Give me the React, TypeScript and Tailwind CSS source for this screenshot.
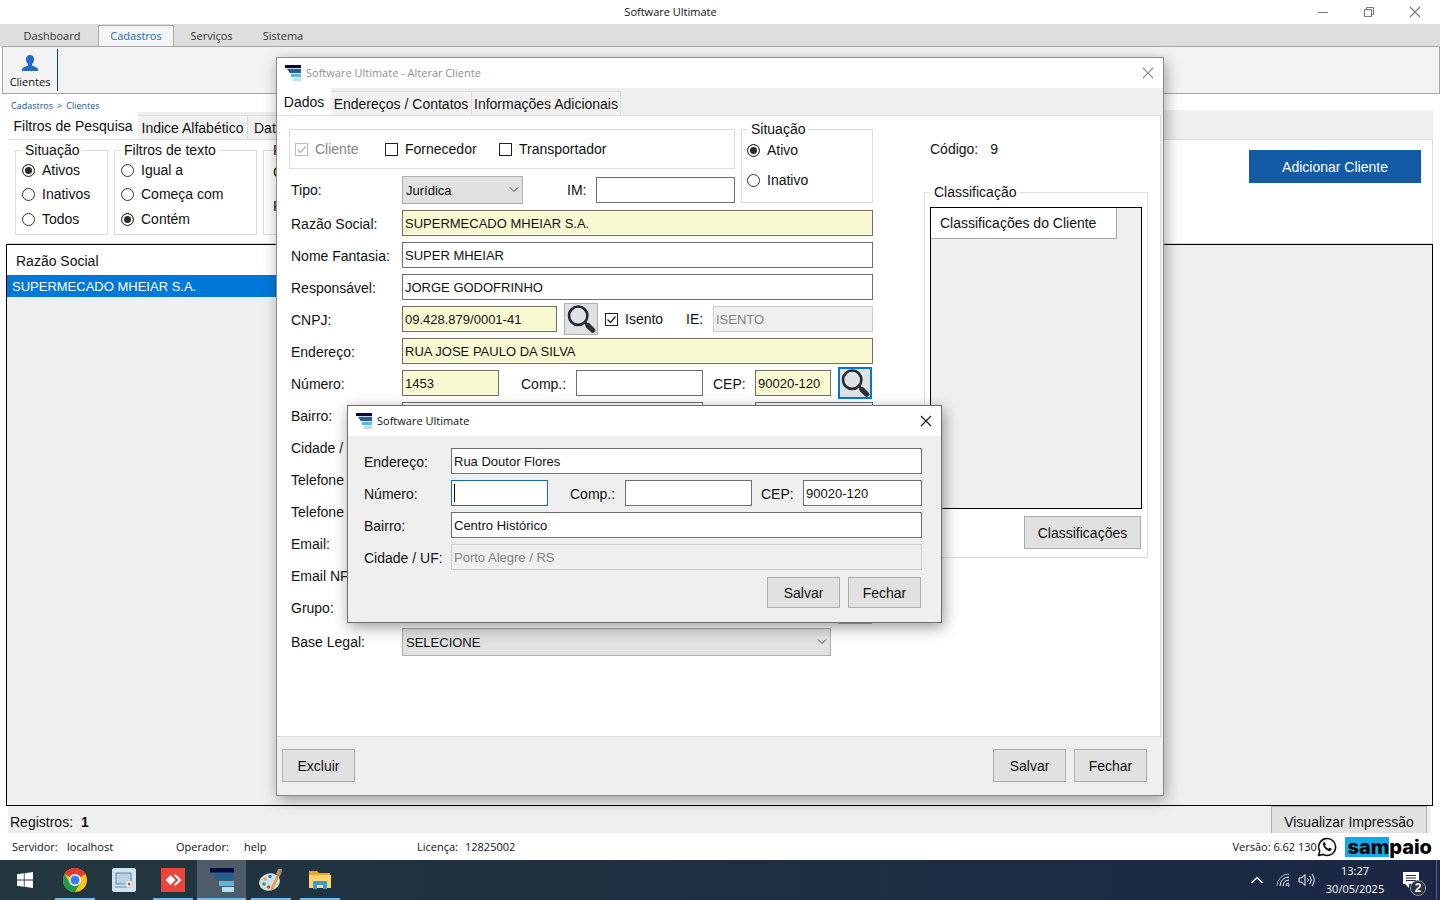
import type { ComponentProps, ReactNode } from 'react';
import clsx from 'clsx';

const ribbonTabs = [
  { label: 'Dashboard', width: 'w-[98px] pl-1.5' },
  { label: 'Cadastros', width: 'w-[76px]', active: true },
  { label: 'Serviços', width: 'w-[75px]' },
  { label: 'Sistema', width: 'w-[68px]' },
];

function AppLogo({ className }: { className?: string }) {
  return (
    <svg viewBox="0 0 24 24" className={className} aria-hidden="true">
      <rect x="0" y="0" width="24" height="4.500" fill="#04093f" />
      <path d="M3 5.500h21v6.500H7z" fill="#245f93" />
      <rect x="9" y="13" width="15" height="5" rx="0.500" fill="#5fb4dd" />
      <rect x="12" y="19" width="12" height="5" rx="0.500" fill="#b4e2f5" />
    </svg>
  );
}

function CloseIcon({ className }: { className?: string }) {
  return (
    <svg viewBox="0 0 12 12" className={clsx('size-3', className)} fill="none" stroke="currentColor" strokeWidth="1.1">
      <path d="M1 1l10 10M11 1L1 11" />
    </svg>
  );
}

function SearchIcon() {
  return (
    <svg viewBox="0 0 32 32" className="size-[30px]" fill="none">
      <circle cx="13" cy="12.500" r="9.800" stroke="#222c3a" strokeWidth="2.800" />
      <path d="M20 19.500l3 3" stroke="#222c3a" strokeWidth="2.800" />
      <path d="M23.500 23l5 5" stroke="#2a2f38" strokeWidth="5.500" strokeLinecap="round" />
    </svg>
  );
}

function Field({ className, ...props }: ComponentProps<'input'>) {
  return (
    <input
      type="text"
      {...props}
      className={clsx(
        'h-[26px] min-w-0 rounded-none border px-0.5 text-[13px] outline-none',
        props.disabled ? 'border-[#cccccc] bg-[#efefef] text-[#838383]' : 'border-[#6e6e6e]',
        props.required ? 'bg-[#fafad2]' : !props.disabled && 'bg-white',
        className,
      )}
    />
  );
}

function Check({ label, className, ...props }: ComponentProps<'input'> & { label: string }) {
  return (
    <label className={clsx('flex items-center gap-[7px]', props.disabled && 'text-[#838383]', className)}>
      <span className="relative flex">
        <input
          type="checkbox"
          {...props}
          className="peer size-[13px] appearance-none border border-[#222] bg-white disabled:border-[#bcbcbc]"
        />
        <svg
          viewBox="0 0 13 13"
          className="pointer-events-none absolute inset-0 hidden size-[13px] peer-checked:block"
          fill="none"
          stroke={props.disabled ? '#b5b5b5' : '#222'}
          strokeWidth="1.300"
        >
          <path d="M2.500 6.500l3 3 5-6" />
        </svg>
      </span>
      {label}
    </label>
  );
}

function Radio({ label, className, ...props }: ComponentProps<'input'> & { label: string }) {
  return (
    <label className={clsx('flex items-center gap-[7px]', className)}>
      <input
        type="radio"
        {...props}
        className="size-[13px] appearance-none rounded-full border border-[#333] bg-white checked:bg-[#2b2b2b] checked:shadow-[inset_0_0_0_2px_white]"
      />
      {label}
    </label>
  );
}

function Combo({ id, options, className }: { id: string; options: string[]; className?: string }) {
  return (
    <div className={clsx('relative h-7', className)}>
      <select id={id} className="size-full appearance-none rounded-none border border-[#adadad] bg-[#e1e1e1] pt-0.5 pl-[3px] text-[13px]">
        {options.map((o) => (
          <option key={o}>{o}</option>
        ))}
      </select>
      <svg viewBox="0 0 10 6" className="pointer-events-none absolute top-[11px] right-1 h-1.5 w-2.5" fill="none" stroke="#444">
        <path d="M1 0.500l4 4 4-4" />
      </svg>
    </div>
  );
}

function PushButton({ className, compact, ...props }: ComponentProps<'button'> & { compact?: boolean }) {
  return (
    <button
      type="button"
      {...props}
      className={clsx('border border-[#adadad] bg-[#e1e1e1]', compact ? 'h-[31px]' : 'h-[33px]', className)}
    />
  );
}

function Row({ label, htmlFor, children }: { label: string; htmlFor?: string; children?: ReactNode }) {
  return (
    <div className="flex h-8 items-center">
      <label htmlFor={htmlFor} className="w-[113px] shrink-0 pt-0.5 pl-0.5 whitespace-nowrap">
        {label}
      </label>
      {children}
    </div>
  );
}

function Tab({ children, active, className }: { children: ReactNode; active?: boolean; className?: string }) {
  return (
    <button
      type="button"
      role="tab"
      aria-selected={!!active}
      className={clsx(
        'overflow-hidden whitespace-nowrap',
        active ? 'h-[27px] bg-white' : 'h-6 border-t border-r border-[#dcdcdc] bg-[#f1f1f1]',
        className,
      )}
    >
      {children}
    </button>
  );
}

function AddressDialog() {
  return (
    <section
      role="dialog"
      aria-label="Software Ultimate"
      className="absolute top-[347px] left-[70px] w-[595px] border border-[#6d6d6d] bg-[#efefef] shadow-[2px_4px_14px_rgba(0,0,0,0.4)]"
    >
      <header className="flex h-[30px] items-center justify-between bg-white pr-[9px] pl-2 font-['Open_Sans',sans-serif] text-[11px]">
        <span className="flex items-center gap-[5px]">
          <AppLogo className="size-4" />
          Software Ultimate
        </span>
        <button type="button" aria-label="Fechar janela">
          <CloseIcon />
        </button>
      </header>
      <form className="pt-[9px] pr-[19px] pb-3.5 pl-4">
        <div className="flex h-8 items-center">
          <label htmlFor="d-endereco" className="w-[87px] pt-0.5">Endereço:</label>
          <Field id="d-endereco" defaultValue="Rua Doutor Flores" className="flex-1" />
        </div>
        <div className="flex h-8 items-center">
          <label htmlFor="d-numero" className="w-[87px] pt-0.5">Número:</label>
          <span className="relative flex">
            <Field id="d-numero" className="w-[97px] border-[#0f6fa8]! caret-transparent" />
            <span className="absolute top-1 left-[3px] h-[18px] w-px bg-black" />
          </span>
          <label htmlFor="d-comp" className="w-[77px] pt-0.5 pl-[22px]">Comp.:</label>
          <Field id="d-comp" className="w-[127px]" />
          <label htmlFor="d-cep" className="w-[51px] pt-0.5 pl-[9px]">CEP:</label>
          <Field id="d-cep" defaultValue="90020-120" className="flex-1" />
        </div>
        <div className="flex h-8 items-center">
          <label htmlFor="d-bairro" className="w-[87px] pt-0.5">Bairro:</label>
          <Field id="d-bairro" defaultValue="Centro Histórico" className="flex-1" />
        </div>
        <div className="flex h-8 items-center">
          <label htmlFor="d-cidade" className="w-[87px] pt-0.5 whitespace-nowrap">Cidade / UF:</label>
          <Field id="d-cidade" defaultValue="Porto Alegre / RS" disabled className="flex-1" />
        </div>
        <div className="mt-1 flex justify-end gap-2 pr-px">
          <PushButton compact className="w-[73px]">Salvar</PushButton>
          <PushButton compact className="w-[73px]">Fechar</PushButton>
        </div>
      </form>
    </section>
  );
}

function ClientForm() {
  return (
    <div className="w-[584px] shrink-0">
      <div className="mb-1 flex h-[83px] gap-1.5">
        <div className="w-[446px] shrink-0 pt-[9px]">
          <div className="flex h-10 items-center border border-[#dcdcdc] pl-[5px]">
            <Check label="Cliente" defaultChecked disabled className="w-[90px]" />
            <Check label="Fornecedor" className="w-[114px]" />
            <Check label="Transportador" />
          </div>
          <div className="mt-[7px] flex items-center">
            <label htmlFor="tipo" className="w-[113px] pl-0.5">Tipo:</label>
            <Combo id="tipo" options={['Jurídica', 'Física']} className="w-[121px]" />
            <label htmlFor="im" className="w-[73px] pl-11">IM:</label>
            <Field id="im" className="flex-1" />
          </div>
        </div>
        <fieldset className="w-[132px] shrink-0 border border-[#dcdcdc] pl-[5px]">
          <legend className="ml-px px-[3px] leading-[18px]">Situação</legend>
          <Radio name="situacao" label="Ativo" defaultChecked className="h-6" />
          <Radio name="situacao" label="Inativo" className="mt-1.5 h-6" />
        </fieldset>
      </div>
      <Row label="Razão Social:" htmlFor="razao">
        <Field id="razao" required defaultValue="SUPERMECADO MHEIAR S.A." className="flex-1" />
      </Row>
      <Row label="Nome Fantasia:" htmlFor="fantasia">
        <Field id="fantasia" defaultValue="SUPER MHEIAR" className="flex-1" />
      </Row>
      <Row label="Responsável:" htmlFor="responsavel">
        <Field id="responsavel" defaultValue="JORGE GODOFRINHO" className="flex-1" />
      </Row>
      <Row label="CNPJ:" htmlFor="cnpj">
        <Field id="cnpj" required defaultValue="09.428.879/0001-41" className="w-[155px]" />
        <button type="button" aria-label="Consultar CNPJ" className="ml-[7px] flex h-8 w-[34px] items-center justify-center border border-[#adadad] bg-[#e1e1e1]">
          <SearchIcon />
        </button>
        <Check label="Isento" defaultChecked className="ml-[7px] w-[81px]" />
        <label htmlFor="ie" className="w-[27px]">IE:</label>
        <Field id="ie" disabled defaultValue="ISENTO" className="flex-1" />
      </Row>
      <Row label="Endereço:" htmlFor="endereco">
        <Field id="endereco" required defaultValue="RUA JOSE PAULO DA SILVA" className="flex-1" />
      </Row>
      <Row label="Número:" htmlFor="numero">
        <Field id="numero" required defaultValue="1453" className="w-[97px]" />
        <label htmlFor="comp" className="w-[77px] pt-0.5 pl-[22px]">Comp.:</label>
        <Field id="comp" className="w-[127px]" />
        <label htmlFor="cep" className="w-[52px] pt-0.5 pl-2.5">CEP:</label>
        <Field id="cep" required defaultValue="90020-120" className="w-[76px]" />
        <button type="button" aria-label="Consultar CEP" className="ml-[7px] flex h-8 w-[34px] items-center justify-center border-2 border-[#0078d7] bg-[#e1e1e1]">
          <SearchIcon />
        </button>
      </Row>
      <Row label="Bairro:" htmlFor="bairro">
        <Field id="bairro" className="w-[301px]" />
        <Field aria-label="Caixa postal" className="ml-[52px] flex-1" />
      </Row>
      <Row label="Cidade / UF:" htmlFor="cidade">
        <Field id="cidade" className="flex-1" />
      </Row>
      <Row label="Telefone 1:" htmlFor="tel1">
        <Field id="tel1" className="w-[155px]" />
      </Row>
      <Row label="Telefone 2:" htmlFor="tel2">
        <Field id="tel2" className="w-[155px]" />
      </Row>
      <Row label="Email:" htmlFor="email">
        <Field id="email" className="flex-1" />
      </Row>
      <Row label="Email NFe:" htmlFor="emailnfe">
        <Field id="emailnfe" className="flex-1" />
      </Row>
      <Row label="Grupo:" htmlFor="grupo">
        <Combo id="grupo" options={['SELECIONE']} className="w-[429px]" />
        <PushButton aria-label="Adicionar grupo" className="ml-[7px] w-[34px]" />
      </Row>
      <div className="mt-[5px] flex items-center">
        <label htmlFor="base" className="w-[113px] pl-0.5">Base Legal:</label>
        <Combo id="base" options={['SELECIONE']} className="w-[429px]" />
      </div>
    </div>
  );
}

function ClientDialog() {
  return (
    <section
      role="dialog"
      aria-label="Alterar Cliente"
      className="absolute top-[57px] left-1/2 w-[888px] -translate-x-1/2 border border-[#8c8c8c] bg-[#efefef] shadow-[2px_4px_14px_rgba(0,0,0,0.35)]"
    >
      <header className="flex h-[30px] items-center justify-between bg-white pr-[9px] pl-2 font-['Open_Sans',sans-serif] text-[11px] text-[#8f8f8f]">
        <span className="flex items-center gap-[5px]">
          <AppLogo className="size-4" />
          Software Ultimate - Alterar Cliente
        </span>
        <button type="button" aria-label="Fechar janela">
          <CloseIcon />
        </button>
      </header>
      <div role="tablist" className="flex h-[27px] items-end">
        <Tab active className="w-[54px]">Dados</Tab>
        <Tab className="w-[141px]">Endereços / Contatos</Tab>
        <Tab className="w-[149px]">Informações Adicionais</Tab>
      </div>
      <div className="mr-0.5 flex min-h-[622px] border-y border-r border-[#dcdcdc] bg-white pt-1 pl-3">
        <ClientForm />
        <div className="ml-[51px] w-56">
          <p className="mb-[26px] flex gap-3 pt-5 pl-1.5 leading-[18px]">
            <span>Código:</span>
            <span>9</span>
          </p>
          <fieldset className="border border-[#dcdcdc] px-[5px] pb-2">
            <legend className="px-1 leading-4">Classificação</legend>
            <div className="mt-[7px] h-[302px] border border-black bg-[#efefef]">
              <table className="w-[186px]">
                <thead>
                  <tr>
                    <th className="h-[30px] border-r border-b border-[#a5a5a5] bg-white pl-[9px] text-left font-normal">Classificações do Cliente</th>
                  </tr>
                </thead>
              </table>
            </div>
            <div className="mt-[7px] flex justify-end pr-px">
              <PushButton className="w-[117px]">Classificações</PushButton>
            </div>
          </fieldset>
        </div>
      </div>
      <footer className="flex items-center gap-2 pt-3 pr-4 pb-[13px] pl-[5px]">
        <PushButton className="mr-auto w-[73px]">Excluir</PushButton>
        <PushButton className="w-[73px]">Salvar</PushButton>
        <PushButton className="w-[73px]">Fechar</PushButton>
      </footer>
      <AddressDialog />
    </section>
  );
}

function SearchFilters() {
  return (
    <div className="flex h-[105px] items-start gap-1.5 border-y border-r border-[#dcdcdc] bg-white pt-0.5 pr-[11px] pl-[7px]">
      <fieldset className="h-[93px] w-[93px] border border-[#dcdcdc] pl-1.5">
        <legend className="px-[3px] leading-4">Situação</legend>
        <Radio name="f-situacao" label="Ativos" defaultChecked className="h-6" />
        <Radio name="f-situacao" label="Inativos" className="h-6" />
        <Radio name="f-situacao" label="Todos" className="h-[26px]" />
      </fieldset>
      <fieldset className="h-[93px] w-[143px] border border-[#dcdcdc] pl-1.5">
        <legend className="px-[3px] leading-4">Filtros de texto</legend>
        <Radio name="f-texto" label="Igual a" className="h-6" />
        <Radio name="f-texto" label="Começa com" className="h-6" />
        <Radio name="f-texto" label="Contém" defaultChecked className="h-[26px]" />
      </fieldset>
      <fieldset className="h-[93px] w-[420px] border border-[#dcdcdc] pl-[9px]">
        <legend className="leading-4">Pesquisa</legend>
        <label htmlFor="campo" className="flex h-7 items-center">Campo:</label>
        <label htmlFor="filtro" className="mt-1.5 flex h-7 items-center">Filtro:</label>
      </fieldset>
      <button type="button" className="mt-2 ml-auto h-[33px] w-[172px] bg-[#135ca5] text-white">
        Adicionar Cliente
      </button>
    </div>
  );
}

function TaskButton({ label, running, active, children }: { label: string; running?: boolean; active?: boolean; children: ReactNode }) {
  return (
    <button
      type="button"
      aria-label={label}
      className={clsx('flex w-[49px] flex-col items-center justify-end', active && 'bg-[#4c5c69]')}
    >
      <span className="flex flex-1 items-center pt-0.5">{children}</span>
      <span className={clsx('h-0.5', active ? 'w-full' : 'w-10', running && 'bg-[#76b9ed]')} />
    </button>
  );
}

function Taskbar() {
  return (
    <footer className="flex h-10 bg-linear-to-r from-[#22373f] to-[#1b2744] text-white">
      <TaskButton label="Iniciar">
        <svg viewBox="0 0 16 16" className="size-4" fill="#fff">
          <path d="M0 2.300l6.800-1v6.300H0zM7.600 1.200L16 0v7.600H7.600zM0 8.400h6.800v6.300L0 13.700zM7.600 8.400H16V16l-8.400-1.200z" />
        </svg>
      </TaskButton>
      <div className="ml-px flex">
        <TaskButton label="Chrome" running>
          <svg viewBox="0 0 24 24" className="size-6">
            <circle cx="12" cy="12" r="12" fill="#fbc116" />
            <path d="M12 12L1.600 6A12 12 0 0 1 22.400 6z" fill="#e33b2e" />
            <path d="M1.600 6A12 12 0 0 0 12 24l5.200-9H6.800z" fill="#229a4c" />
            <circle cx="12" cy="12" r="6" fill="#fff" />
            <circle cx="12" cy="12" r="4.500" fill="#3b7ded" />
          </svg>
        </TaskButton>
        <TaskButton label="Captura">
          <svg viewBox="0 0 24 24" className="size-6" fill="none">
            <rect width="24" height="24" rx="2" fill="#cfe3f3" />
            <rect x="4" y="5" width="15" height="11" fill="#b8d3e8" stroke="#64879f" />
            <path d="M3 19h12" stroke="#64879f" />
            <circle cx="17" cy="16" r="3.500" fill="#fff" stroke="#b9c4cc" />
            <circle cx="17" cy="16" r="1.500" fill="#e0443a" />
          </svg>
        </TaskButton>
        <TaskButton label="AnyDesk" running>
          <svg viewBox="0 0 24 24" className="size-6">
            <rect width="24" height="24" fill="#ef443b" />
            <path d="M9.500 7l5 5-5 5-5-5z" fill="#fff" />
            <path d="M13 7.500l1.500-1.500 6 6-6 6-1.500-1.500 4.500-4.500z" fill="#fff" />
          </svg>
        </TaskButton>
        <TaskButton label="Software Ultimate" running active>
          <AppLogo className="size-6" />
        </TaskButton>
        <TaskButton label="Paint" running>
          <svg viewBox="0 0 24 24" className="size-6">
            <ellipse cx="10.500" cy="14" rx="10.500" ry="8.500" fill="#cfe0ea" transform="rotate(-15 10.500 14)" />
            <circle cx="6" cy="11" r="1.800" fill="#f0a830" />
            <circle cx="5" cy="16" r="1.800" fill="#2e9e54" />
            <circle cx="11" cy="8.500" r="1.800" fill="#3577c8" />
            <circle cx="9.500" cy="19" r="1.800" fill="#d8433a" />
            <path d="M18 7l2.500 1-6 13-3 2 .5-4z" fill="#dfa24c" />
            <path d="M17 6l2-5 4 0-.5 4-2 3.500z" fill="#b88a63" />
          </svg>
        </TaskButton>
        <TaskButton label="Explorador" running>
          <svg viewBox="0 0 24 24" className="size-6">
            <path d="M1 3h8l2 2h11v5H1z" fill="#e9a825" />
            <path d="M1 7h22v13H1z" fill="#fcd56b" />
            <path d="M5 13h14v8h-4v-4H9v4H5z" fill="#3f98d8" />
          </svg>
        </TaskButton>
      </div>
      <div className="ml-auto flex items-center">
        <svg viewBox="0 0 12 8" className="mr-[13px] h-2 w-3" fill="none" stroke="#fff" strokeWidth="1.200">
          <path d="M0.500 7L6 1.500 11.500 7" />
        </svg>
        <svg viewBox="0 0 14 14" className="mr-2 size-3.5" fill="none" stroke="#fff">
          <path d="M1 13A12 12 0 0 1 13 1" stroke="#a8b2bf" />
          <path d="M4 13a9 9 0 0 1 9-9M7 13a6 6 0 0 1 6-6M10 13a3 3 0 0 1 3-3" />
          <circle cx="12.500" cy="12.500" r="1" fill="#fff" stroke="none" />
        </svg>
        <svg viewBox="0 0 18 14" className="mr-2 h-3.5 w-[18px]" fill="none" stroke="#fff">
          <path d="M1 5h2.500L7 1.500v11L3.500 9H1zM9.500 5q1.500 2 0 4M11.800 3q3 4 0 8M14 1q4.500 6 0 12" />
        </svg>
        <div className="w-[62px] text-center font-['Open_Sans',sans-serif] text-[11px] leading-[18px]">
          <div>13:27</div>
          <div>30/05/2025</div>
        </div>
        <button type="button" aria-label="Notificações" className="relative mr-1.5 ml-3 flex h-10 w-8 items-center pl-1">
          <svg viewBox="0 0 18 18" className="size-[18px]">
            <path d="M1 1h16v12H7v4l-4-4H1z" fill="#fff" />
            <path d="M4 4.500h10M4 7h10M4 9.500h10" stroke="#1b2744" />
          </svg>
          <span className="absolute top-5 left-3 flex size-4 items-center justify-center rounded-full border border-[#8d929c] bg-[#2a3242] text-[12px] font-bold">2</span>
        </button>
        <span className="h-10 w-1 border-l border-[#56607a]" />
      </div>
    </footer>
  );
}

export default function App() {
  return (
    <div className="flex min-h-screen flex-col bg-white font-['Liberation_Sans',Arial,sans-serif] text-[14px] leading-[18px] text-[#111]">
      <main className="relative flex flex-1 flex-col">
        <header className="flex h-6 items-center font-['Open_Sans',sans-serif] text-[11px]">
          <div className="flex-1" />
          <h1 className="pr-20">Software Ultimate</h1>
          <div className="flex flex-1 justify-end gap-[34px] pr-[19px] text-[#777]">
            <button type="button" aria-label="Minimizar">
              <svg viewBox="0 0 12 12" className="size-3" stroke="currentColor">
                <path d="M1 6.500h10" />
              </svg>
            </button>
            <button type="button" aria-label="Restaurar">
              <svg viewBox="0 0 12 12" className="size-3" fill="none" stroke="currentColor">
                <path d="M1.500 3.500h7v7h-7zM3.500 3.500v-2h7v7h-2" />
              </svg>
            </button>
            <button type="button" aria-label="Fechar">
              <CloseIcon />
            </button>
          </div>
        </header>

        <nav className="flex h-[22px] items-end bg-[#dedede] font-['Open_Sans',sans-serif] text-[11px] text-[#333]">
          {ribbonTabs.map((tab) => (
            <button
              key={tab.label}
              type="button"
              className={clsx(
                'h-[21px] text-center',
                tab.width,
                tab.active && 'border-x border-t border-[#a8a8a8] bg-[#f4f4f4] text-[#1b6fb5]',
              )}
            >
              {tab.label}
            </button>
          ))}
        </nav>
        <div className="ml-0.5 flex h-12 border border-[#a5a5a5] bg-[#f3f3f3] py-0.5">
          <button type="button" className="flex w-[55px] flex-col items-center border-r border-[#1c3f6e] pt-1.5 font-['Open_Sans',sans-serif] text-[11px]">
            <svg viewBox="0 0 16 16" className="size-4" fill="#1e6bd0">
              <path d="M8 0c2.600 0 4 1.800 4 4.500 0 2-1 3.700-2 4.500v1.500l5 2.200c.7.400 1 1.200 1 3.300H0c0-2.100.3-2.900 1-3.300l5-2.200V9C5 8.200 4 6.500 4 4.500 4 1.800 5.400 0 8 0z" />
            </svg>
            <span className="mt-0.5">Clientes</span>
          </button>
        </div>

        <div className="flex min-h-0 flex-1 flex-col pr-[7px] pl-1.5">
          <nav aria-label="Trilha" className="flex h-[18px] items-end">
            <div className="flex w-[270px] gap-1 pl-[5px] font-['Open_Sans',sans-serif] text-[9px] leading-3 text-[#1d5591]">
              <a href="#cadastros">Cadastros</a>
              <span>&gt;</span>
              <a href="#clientes">Clientes</a>
            </div>
            <span className="h-0.5 flex-1 bg-[#efefef]" />
          </nav>
          <div className="ml-0.5 flex flex-col bg-[#efefef]">
            <div role="tablist" className="flex h-[27px] items-end">
              <Tab active className="w-[130px]">Filtros de Pesquisa</Tab>
              <Tab className="w-[110px]">Indice Alfabético</Tab>
              <Tab className="w-[140px] pl-1.5 text-left">Data de Cadastro</Tab>
            </div>
            <SearchFilters />
          </div>
          <div className="flex-1 border border-black bg-[#efefef]">
            <table className="w-[600px]">
              <thead>
                <tr>
                  <th className="h-[30px] bg-white pt-0.5 pl-[9px] text-left font-normal">Razão Social</th>
                </tr>
              </thead>
              <tbody>
                <tr>
                  <td className="h-[22px] bg-[#0078d7] pt-0.5 pl-[5px] text-[13px] text-white">SUPERMECADO MHEIAR S.A.</td>
                </tr>
              </tbody>
            </table>
          </div>
          <div className="mr-0.5 ml-0.5 flex h-[27px] items-start justify-between overflow-hidden bg-[#efefef] pr-1 pl-0.5">
            <p className="pt-[7px]">
              Registros: <b className="ml-1">1</b>
            </p>
            <PushButton className="w-[156px] shrink-0 pb-0.5">Visualizar Impressão</PushButton>
          </div>
        </div>

        <div className="flex h-[27px] items-center pl-3 font-['Open_Sans',sans-serif] text-[11px]">
          <span className="w-[55px]">Servidor:</span>
          <span className="w-[109px]">localhost</span>
          <span className="w-[68px]">Operador:</span>
          <span className="w-[173px]">help</span>
          <span className="w-12">Licença:</span>
          <span>12825002</span>
          <span className="ml-auto w-[85px] overflow-hidden whitespace-nowrap">Versão: 6.62 1305</span>
          <svg viewBox="0 0 20 20" className="size-5" fill="none" stroke="#111" strokeWidth="1.600">
            <path d="M1.500 18.500l1.200-4.400A8.500 8.500 0 1 1 6 17.400z" strokeLinejoin="round" />
            <path
              d="M6.500 5.500c.6-.6 1.200-.5 1.500.2l.7 1.600c.1.400-.7 1-.6 1.300.6 1.400 1.700 2.500 3.200 3.100.4.100 1-1 1.400-.9l1.600.8c.6.300.4 1.300-.3 1.900-1.300 1-3.500.3-5.600-1.600C6.300 9.900 5.300 7 6.500 5.500z"
              fill="#111"
              stroke="none"
            />
          </svg>
          <a href="#sampaio" className="mx-2 flex h-5 items-center font-['Inter',sans-serif] text-[20px] leading-5 font-extrabold text-black">
            <span className="bg-[#14a9e8] pl-0.5">sam</span>paio
          </a>
        </div>

        <ClientDialog />
      </main>
      <Taskbar />
    </div>
  );
}
